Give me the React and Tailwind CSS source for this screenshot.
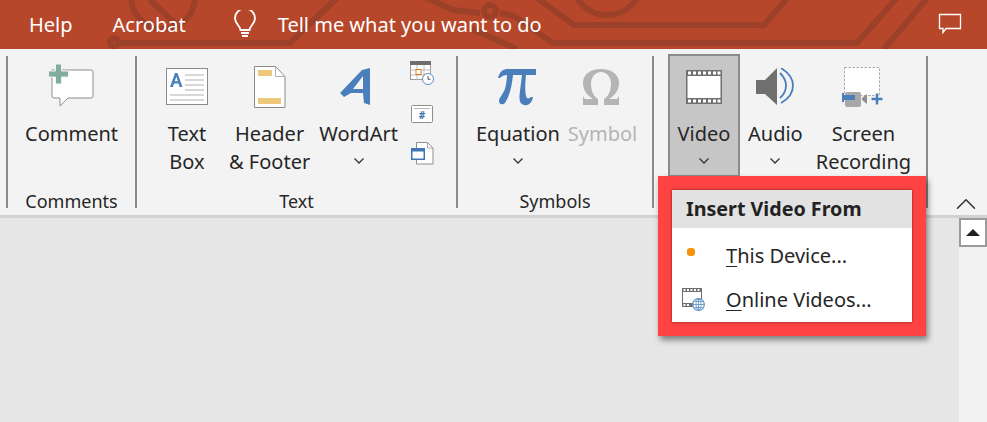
import { ChevronUp } from "lucide-react";

const font = { fontFamily: '"Noto Sans", "Open Sans", sans-serif' };

function Chevron() {
  return (
    <svg width="12" height="8" viewBox="0 0 12 8" className="mx-auto">
      <path d="M1.500 1.500 6 6l4.500-4.500" fill="none" stroke="#333" strokeWidth="1.300" />
    </svg>
  );
}

function CommentIcon() {
  return (
    <svg width="46" height="46" viewBox="0 0 46 46" className="-ml-[2px]">
      <path d="M4 6h39a2 2 0 0 1 2 2v24a2 2 0 0 1-2 2H20l-8 8v-8H6a2 2 0 0 1-2-2z" fill="#fff" stroke="#8e8e8e" strokeWidth="1" />
      <path d="M7.500 0h6v7h7v6h-7v7h-6v-7h-7V7h7z" fill="#7fae9d" stroke="#f3f3f3" strokeWidth="1" />
    </svg>
  );
}

function TextBoxIcon() {
  return (
    <svg width="42" height="38" viewBox="0 0 42 38">
      <rect x="0.500" y="0.500" width="41" height="36" fill="#fff" stroke="#8a8a8a" />
      <path d="M19 7h19M19 12h19M19 17h19M19 22h19M4 27h34M4 32h34" stroke="#b0b0b0" strokeWidth="1" />
      <path d="M4 19 9 5h2.500l5 14h-2.800l-1.200-3.600H8L6.800 19zM8.800 13.200h3L10.300 8.500z" fill="#4a7fbb" />
    </svg>
  );
}

function HeaderIcon() {
  return (
    <svg width="32" height="43" viewBox="0 0 32 43">
      <path d="M.5.500h21l9.500 10v31H.5z" fill="#fff" stroke="#8a8a8a" />
      <path d="M21.500.500v10h9.500" fill="none" stroke="#b0b0b0" />
      <rect x="4" y="4" width="14" height="6" fill="#ecc77c" />
      <rect x="4" y="32" width="23" height="6" fill="#ecc77c" />
    </svg>
  );
}

function WordArtIcon() {
  return (
    <svg width="32" height="38" viewBox="0 0 32 38" className="-ml-[5px]">
      <path d="M0 25 22 2l8-2v37l-6-2-1-10H11l-7 4zM13 21h10V8z" fill="#4a7fbb" fillRule="evenodd" />
    </svg>
  );
}

function SmallStack() {
  return (
    <div className="ml-[12px] flex flex-col items-center gap-[19px] pt-[5px]">
      <svg width="25" height="25" viewBox="0 0 25 25">
        <rect x=".5" y=".5" width="20" height="18" fill="#fff" stroke="#9a9a9a" />
        <rect x="0" y="0" width="21" height="4" fill="#6e6e6e" />
        <path d="M7 4v15M14 4v15M1 9h20M1 14h20" stroke="#bdbdbd" />
        <rect x="6" y="8.500" width="5" height="5" fill="#fff" stroke="#e07b1a" />
        <circle cx="18" cy="18" r="5.500" fill="#fff" stroke="#5b8fc4" />
        <path d="M18 15v3.300h2.500" fill="none" stroke="#555" />
      </svg>
      <svg width="22" height="18" viewBox="0 0 22 18">
        <rect x=".5" y=".5" width="21" height="17" rx="1" fill="#fff" stroke="#8e8e8e" />
        <path d="M3 3.500h16" stroke="#b5b5b5" />
        <text x="11" y="14" textAnchor="middle" fontSize="10" fontWeight="700" fill="#3f76b3" style={font}>#</text>
      </svg>
      <svg width="23" height="23" viewBox="0 0 23 23">
        <path d="M5.500.500h11l5.500 5.500v16H5.500z" fill="#fff" stroke="#8e8e8e" />
        <path d="M16.500.500v5.500h5.500" fill="none" stroke="#aaa" />
        <rect x=".75" y="6.750" width="12.500" height="10.500" fill="#fff" stroke="#3f76b3" strokeWidth="1.500" />
        <rect x="0" y="6" width="14" height="3.500" fill="#3f76b3" />
      </svg>
    </div>
  );
}

function VideoIcon() {
  return (
    <svg width="36" height="34" viewBox="0 0 36 34">
      <rect width="36" height="34" fill="#6f6f6f" />
      <rect x="1.500" y="6" width="33" height="22" fill="#fff" />
      {[2, 7, 12, 17, 22, 27, 31.500].map((x) => (
        <g key={x}>
          <rect x={x} y="1.500" width="3" height="3" fill="#fff" />
          <rect x={x} y="29.500" width="3" height="3" fill="#fff" />
        </g>
      ))}
    </svg>
  );
}

function AudioIcon() {
  return (
    <svg width="38" height="38" viewBox="0 0 38 38">
      <path d="M0 12h9L21 0v37L9 26H0z" fill="#6f6f6f" />
      <path d="M24 5c4 4 6 8 6 12.500s-2 9-6 12.500M25 0c8 5 12 11 12 17.500s-4 13-12 17.500" fill="none" stroke="#4a7fbb" strokeWidth="1.800" />
    </svg>
  );
}

function RecordIcon() {
  return (
    <svg width="42" height="41" viewBox="0 0 42 41">
      <rect x="2.500" y=".5" width="35" height="28" fill="#fff" stroke="#aaa" strokeDasharray="2.500 1.500" />
      <rect x="3" y="25" width="16" height="15" rx="2" fill="#a8a8a8" />
      <rect x="0" y="28" width="13" height="5" fill="#4a7fbb" />
      <rect x="0" y="26" width="2" height="9" fill="#4a7fbb" />
      <path d="M20 31l5-4v10l-5-4z" fill="#8e8e8e" />
      <path d="M29.500 32h11M35 26.500v11" stroke="#4a7fbb" strokeWidth="2.500" />
    </svg>
  );
}

function OnlineVideoIcon() {
  return (
    <svg width="23" height="23" viewBox="0 0 23 23">
      <rect x="0" y="0" width="20" height="19" fill="#6f6f6f" />
      <rect x="1" y="4" width="18" height="11" fill="#fff" />
      {[1.500, 5, 8.500, 12, 15.500].map((x) => (
        <rect key={x} x={x} y="1" width="2" height="2" fill="#fff" />
      ))}
      {[1.500, 5].map((x) => (
        <rect key={x} x={x} y="16" width="2" height="2" fill="#fff" />
      ))}
      <circle cx="16.500" cy="16.500" r="5.800" fill="#fff" stroke="#5b8fc4" strokeWidth="1.200" />
      <path d="M11 16.500h11M16.500 11v11M12.500 13.500h8M12.500 19.500h8" stroke="#5b8fc4" strokeWidth=".8" />
      <ellipse cx="16.500" cy="16.500" rx="2.500" ry="5.500" fill="none" stroke="#5b8fc4" strokeWidth=".8" />
    </svg>
  );
}

function RibbonButton({ icon, lines, chevron, className = "", muted }) {
  return (
    <div className={`flex flex-col items-center ${className}`}>
      <div className="flex h-[62px] items-center justify-center">{icon}</div>
      <div className={`mt-[2px] text-center text-[20px] leading-[28px] ${muted ? "text-[#b4b4b4]" : "text-[#262626]"}`}>
        {lines.map((l) => (
          <div key={l} className="whitespace-nowrap">{l}</div>
        ))}
      </div>
      {chevron && (
        <div className="mt-[9px]">
          <Chevron />
        </div>
      )}
    </div>
  );
}

function Group({ label, className = "", children }) {
  return (
    <div className={`flex h-[152px] flex-col border-r-2 border-[#8a8a8a] ${className}`}>
      <div className="flex h-[136px] shrink-0 justify-center">{children}</div>
      <div className="shrink-0 text-center text-[18px] leading-[18px] text-[#262626]">{label}</div>
    </div>
  );
}

export default function App() {
  return (
    <div className="relative flex h-[422px] w-[987px] flex-col overflow-hidden bg-[#e6e6e6]" style={font}>
      <div className="relative flex h-[49px] items-center bg-[#b7472a] text-[20px] text-white">
        <svg className="absolute inset-0" width="987" height="49" viewBox="0 0 987 49" fill="none" stroke="#9c4029" strokeWidth="6">
          <circle cx="163" cy="-3" r="32" />
          <path d="M150 0l30 28" />
          <path d="M116 43h174l50-48" />
          <path d="M425 -3l28 13 27 3M500 13l14 3 39 27h304l46-52" />
          <path d="M470 28l47 21" />
          <path d="M537 -2l37 27h190l26-30" />
          <path d="M930 -5l-46 54" />
          <circle cx="490" cy="11" r="6" />
          <circle cx="114" cy="42" r="4" />
          <circle cx="607" cy="-20" r="35" />
        </svg>
        <div className="relative flex w-full items-center pl-[29px]">
          <span>Help</span>
          <span className="ml-[40px]">Acrobat</span>
          <svg className="ml-[47px]" width="24" height="30" viewBox="0 0 24 30" fill="none" stroke="#fff" strokeWidth="1.800">
            <path d="M7.500 20c0-4-5.500-6-5.500-11.500a10 10 0 0 1 20 0C22 14 16.500 16 16.500 20z" />
            <path d="M8 23h8M9 26h6" />
          </svg>
          <span className="ml-[21px]">Tell me what you want to do</span>
          <svg className="ml-auto mr-[25px] -mt-[1px]" width="24" height="22" viewBox="0 0 24 22" fill="none" stroke="#fff" strokeWidth="1.300">
            <path d="M1.500 1.500h21v14H8l-3 4v-4H1.500z" />
          </svg>
        </div>
      </div>

      <div className="flex h-[169px] border-b-[3px] border-[#d2d2d2] bg-[#f3f3f3] pl-[6px] pt-[7px]">
        <div className="h-[152px] w-[2px] bg-[#8a8a8a]" />
        <Group label="Comments" className="w-[129px]">
          <RibbonButton icon={<CommentIcon />} lines={["Comment"]} />
        </Group>
        <Group label="Text" className="w-[321px]">
          <div className="flex w-full pl-[29px]">
            <RibbonButton icon={<TextBoxIcon />} lines={["Text", "Box"]} />
            <RibbonButton className="ml-[21px]" icon={<HeaderIcon />} lines={["Header", "& Footer"]} />
            <RibbonButton className="ml-[9px]" icon={<WordArtIcon />} lines={["WordArt"]} chevron />
            <SmallStack />
          </div>
        </Group>
        <Group label="Symbols" className="w-[196px]">
          <div className="flex w-full pl-[18px]">
            <RibbonButton
              icon={<svg width="38" height="38" viewBox="0 0 38 38" className="-ml-[2px]"><path d="M0 10C2 3 5 1 10 1h28v6H28c-1 9-1 16 0 21 .5 3 3 3 5 1l2 0c-1 6-5 9-9 8-5-1-5-7-4-14l2-16h-9c-1 10-3 20-8 28-2 2-6 2-6-2 0-3 4-7 6-12 1-4 2-10 2-14H9c-3 0-5 1-7 3z" fill="#4a7fbb" /></svg>}
              lines={["Equation"]}
              chevron
            />
            <RibbonButton
              className="ml-[8px]"
              muted
              icon={<svg width="38" height="38" viewBox="0 0 38 38" className="-ml-[4px]"><path d="M1 37v-9l2 3h8c-5-3-10-8-10-16C1 6 9 1 19 1s18 5 18 14c0 8-5 13-10 16h8l2-3v9H22v-6c4-2 7-8 7-15C29 9 25 4 19 4S9 9 9 16c0 7 3 13 7 15v6z" fill="#b4b4b4" /></svg>}
              lines={["Symbol"]}
            />
          </div>
        </Group>
        <Group label="" className="w-[274px]">
          <div className="flex w-full pl-[14px]">
            <div className="-mt-[2px] h-[123px] w-[72px] border-2 border-[#8a8a8a] bg-[#c6c6c6]">
              <RibbonButton icon={<VideoIcon />} lines={["Video"]} chevron />
            </div>
            <RibbonButton className="ml-[8px]" icon={<AudioIcon />} lines={["Audio"]} chevron />
            <RibbonButton className="ml-[13px]" icon={<RecordIcon />} lines={["Screen", "Recording"]} />
          </div>
        </Group>
        <ChevronUp className="absolute left-[949px] top-[187px] text-[#333]" size={34} strokeWidth={1.100} />
      </div>

      <div className="flex flex-1 justify-end">
        <div className="w-[28px] bg-[#f1f1f1]">
          <div className="flex h-[29px] w-[28px] items-center justify-center border-2 border-[#9a9a9a] bg-white">
            <div className="h-0 w-0 border-x-[7px] border-b-[7px] border-x-transparent border-b-[#222]" />
          </div>
        </div>
      </div>

      <div className="absolute left-[658px] top-[176px] w-[268px] border-[14px] border-[#ff4343] shadow-[2px_4px_6px_rgba(0,0,0,0.45)]">
        <div className="bg-white shadow-[0_0_3px_rgba(0,0,0,0.5)]">
          <div className="flex h-[38px] items-center bg-[#e2e2e2] pl-[14px] text-[19.7px] font-bold text-[#222]">Insert Video From</div>
          <div className="flex h-[51px] items-center pt-[5px]">
            <div className="flex w-[54px] justify-center pb-[8px]"><div className="ml-[-16px] h-[8px] w-[8px] rounded-[3px] bg-[#f7930e]" /></div>
            <span className="text-[20px] text-[#262626]"><span className="underline decoration-1 underline-offset-[3px]">T</span>his Device...</span>
          </div>
          <div className="flex h-[43px] items-center pb-[2px]">
            <div className="flex w-[54px] justify-center pb-[1px] pr-[12px]"><OnlineVideoIcon /></div>
            <span className="text-[20px] text-[#262626]"><span className="underline decoration-1 underline-offset-[3px]">O</span>nline Videos...</span>
          </div>
        </div>
      </div>
    </div>
  );
}
